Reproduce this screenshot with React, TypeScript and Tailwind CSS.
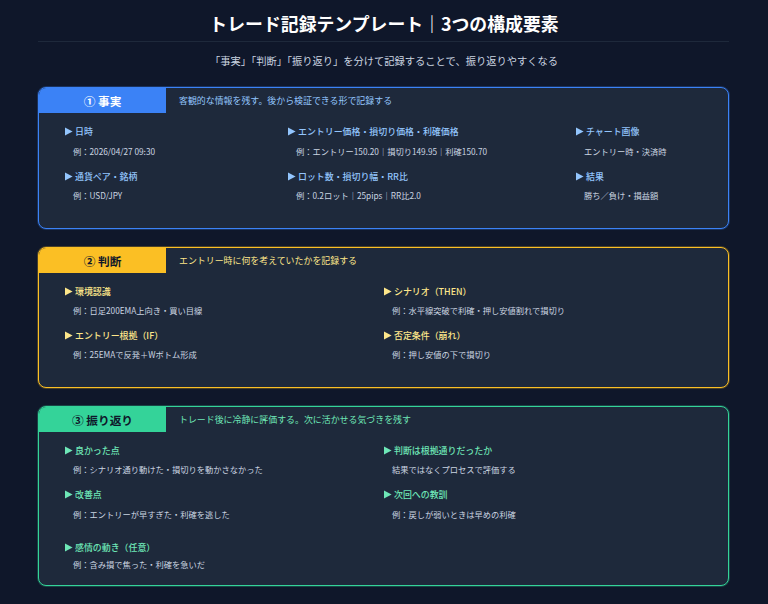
const jp = { fontFamily: '"Noto Sans CJK JP", sans-serif' };

type Item = { title: string; note: string; className?: string; noteClass?: string };

const factItems: Item[] = [
  { title: '日時', note: '例：2026/04/27 09:30' },
  { title: 'エントリー価格・損切り価格・利確価格', note: '例：エントリー150.20｜損切り149.95｜利確150.70' },
  { title: 'チャート画像', note: 'エントリー時・決済時' },
  { title: '通貨ペア・銘柄', note: '例：USD/JPY', noteClass: 'mt-[6px]' },
  { title: 'ロット数・損切り幅・RR比', note: '例：0.2ロット｜25pips｜RR比2.0', noteClass: 'mt-[6px]' },
  { title: '結果', note: '勝ち／負け・損益額', noteClass: 'mt-[6px]' },
];

const judgeItems: Item[] = [
  { title: '環境認識', note: '例：日足200EMA上向き・買い目線', noteClass: 'mt-[6px]' },
  { title: 'シナリオ（THEN）', note: '例：水平線突破で利確・押し安値割れで損切り', noteClass: 'mt-[6px]' },
  { title: 'エントリー根拠（IF）', note: '例：25EMAで反発＋Wボトム形成', noteClass: 'mt-[6px]' },
  { title: '否定条件（崩れ）', note: '例：押し安値の下で損切り', noteClass: 'mt-[6px]' },
];

const reviewItems: Item[] = [
  { title: '良かった点', note: '例：シナリオ通り動けた・損切りを動かさなかった', noteClass: 'mt-[6px]' },
  { title: '判断は根拠通りだったか', note: '結果ではなくプロセスで評価する', noteClass: 'mt-[6px]' },
  { title: '改善点', note: '例：エントリーが早すぎた・利確を逃した' },
  { title: '次回への教訓', note: '例：戻しが弱いときは早めの利確' },
  { title: '感情の動き（任意）', note: '例：含み損で焦った・利確を急いだ', className: 'mt-[8px]', noteClass: 'mt-[4px]' },
];

function Entry({ item, titleColor }: { item: Item; titleColor: string }) {
  return (
    <div className={item.className}>
      <div className={`flex h-[13px] items-center text-[8.94px] font-medium leading-[13px] ${titleColor}`}>
        <svg viewBox="0 0 8 9" className="mr-[2px] h-[9px] w-[8px] shrink-0 fill-current">
          <path d="M0 0.5 L7.6 4.5 L0 8.5 Z" />
        </svg>
        {item.title}
      </div>
      <div className={`h-[13px] pl-[8px] text-[8.25px] leading-[13px] text-[#cbd5e1] ${item.noteClass ?? 'mt-[7px]'}`}>
        {item.note}
      </div>
    </div>
  );
}

function Card({
  label,
  desc,
  border,
  tab,
  descColor,
  titleColor,
  height,
  columns,
  items,
}: {
  label: string;
  desc: string;
  border: string;
  tab: string;
  descColor: string;
  titleColor: string;
  height: string;
  columns: string;
  items: Item[];
}) {
  return (
    <section className={`overflow-hidden rounded-[8px] border bg-[#1e293b] ${border} ${height}`}>
      <div className="flex h-[25px] items-center">
        <div className={`flex h-[25px] w-[127px] items-center justify-center text-[11.7px] font-bold ${tab}`}>{label}</div>
        <div className={`pl-[13px] text-[8.94px] ${descColor}`}>{desc}</div>
      </div>
      <div className={`mt-[12px] grid gap-y-[12px] pl-[26px] ${columns}`}>
        {items.map((item) => (
          <Entry key={item.title} item={item} titleColor={titleColor} />
        ))}
      </div>
    </section>
  );
}

export default function App() {
  return (
    <div style={jp} className="h-[604px] w-[768px] overflow-hidden bg-[#0f172a] px-[38px]">
      <h1 className="mr-[1px] h-[42px] border-b border-[#1e293b] pl-[1px] pt-[9px] text-center text-[17.875px] font-bold leading-[29px] text-white">
        トレード記録テンプレート｜3つの構成要素
      </h1>
      <p className="mt-[11px] h-[16px] text-center text-[10.25px] leading-[16px] text-[#cbd5e1]">
        「事実」「判断」「振り返り」を分けて記録することで、振り返りやすくなる
      </p>
      <div className="mr-[1px] mt-[18px] flex flex-col gap-[18px]">
        <Card
          label="① 事実"
          desc="客観的な情報を残す。後から検証できる形で記録する"
          border="border-[#3b82f6] shadow-[0_0_0_1px_#3b82f640]"
          tab="bg-[#3b82f6] text-white"
          descColor="text-[#93c5fd]"
          titleColor="text-[#93c5fd]"
          height="h-[142px]"
          columns="grid-cols-[223px_288px_1fr]"
          items={factItems}
        />
        <Card
          label="② 判断"
          desc="エントリー時に何を考えていたかを記録する"
          border="border-[#fbbf24] shadow-[0_0_0_1px_#fbbf2440]"
          tab="bg-[#fbbf24] text-[#0f172a]"
          descColor="text-[#fde68a]"
          titleColor="text-[#fde68a]"
          height="h-[141px]"
          columns="grid-cols-[319px_1fr]"
          items={judgeItems}
        />
        <Card
          label="③ 振り返り"
          desc="トレード後に冷静に評価する。次に活かせる気づきを残す"
          border="border-[#34d399] shadow-[0_0_0_1px_#34d39940]"
          tab="bg-[#34d399] text-[#0f172a]"
          descColor="text-[#6ee7b7]"
          titleColor="text-[#6ee7b7]"
          height="h-[180px]"
          columns="grid-cols-[319px_1fr]"
          items={reviewItems}
        />
      </div>
    </div>
  );
}
